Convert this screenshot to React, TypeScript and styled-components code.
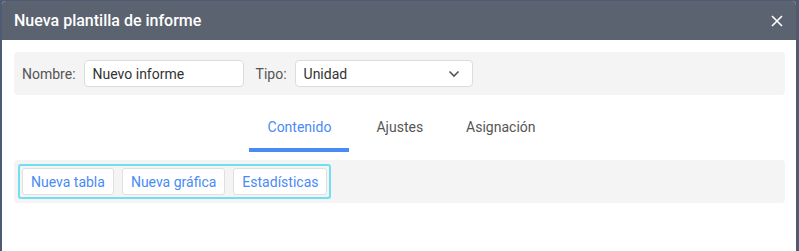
import React from "react";
import styled, { createGlobalStyle } from "styled-components";

const GlobalStyle = createGlobalStyle`
  html, body {
    margin: 0;
    padding: 0;
    background: #4e5b73;
    font-family: Roboto, "Liberation Sans", sans-serif;
  }
`;

const Backdrop = styled.div`
  height: 251px;
  padding: 1px 3px 0 2px;
  box-sizing: border-box;
  overflow: hidden;
`;

const Dialog = styled.div`
  background: #fff;
  height: 100%;
  border-radius: 4px 4px 0 0;
  overflow: hidden;
`;

const Header = styled.div`
  height: 39px;
  background: #5b6270;
  display: flex;
  align-items: center;
  justify-content: space-between;
  padding: 0 13px 0 12px;
`;

const Title = styled.div`
  color: #fff;
  font-size: 16px;
  font-weight: 500;
`;

const Close = styled.button`
  background: none;
  border: 0;
  padding: 0;
  display: flex;
  color: #fff;
  cursor: pointer;
`;

const Body = styled.div`
  padding: 12px 11px 0 12px;
`;

const Panel = styled.div`
  background: #f4f4f4;
  border-radius: 4px;
  height: 43px;
  display: flex;
  align-items: center;
  padding: 0 4px 0 8px;
`;

const Label = styled.label`
  color: #555;
  font-size: 14px;
  margin-right: 8px;
`;

const Input = styled.div<{ $width: number }>`
  width: ${(p) => p.$width}px;
  height: 27px;
  box-sizing: border-box;
  background: #fff;
  border: 1px solid #dcdcdc;
  border-radius: 4px;
  display: flex;
  align-items: center;
  justify-content: space-between;
  padding: 0 12px 0 8px;
  font-size: 14px;
  color: #333;
  margin-right: 12px;
`;

const Tabs = styled.div`
  display: flex;
  justify-content: center;
  margin-top: 15px;
  padding-right: 14px;
  gap: 43px;
`;

const Tab = styled.div<{ $active?: boolean }>`
  font-size: 14px;
  color: ${(p) => (p.$active ? "#4a8af5" : "#555")};
  padding: 9px 0 13px;
  width: ${(p) => (p.$active ? "100px" : "auto")};
  margin-right: ${(p) => (p.$active ? "-16px" : "0")};
  text-align: center;
  border-bottom: 4px solid ${(p) => (p.$active ? "#4a8af5" : "transparent")};
`;

const Toolbar = styled(Panel)`
  margin-top: 8px;
  padding: 0 4px;
`;

const Group = styled.div`
  display: flex;
  gap: 8px;
  padding: 2px;
  border: 2px solid #6fe0ef;
  border-radius: 3px;
`;

const ToolButton = styled.button`
  height: 27px;
  background: #fff;
  border: 1px solid #e0e0e0;
  border-radius: 3px;
  color: #4a8af5;
  font-family: Roboto, "Liberation Sans", sans-serif;
  font-size: 14px;
  padding: 0 8px;
  cursor: pointer;
`;

const Chevron = () => (
  <svg width="12" height="8" viewBox="0 0 12 8" fill="none">
    <path d="M1.5 1.5 6 6 10.5 1.5" stroke="#555" strokeWidth="1.6" />
  </svg>
);

export default function App() {
  return (
    <>
      <GlobalStyle />
      <Backdrop>
        <Dialog>
          <Header>
            <Title>Nueva plantilla de informe</Title>
            <Close aria-label="Cerrar">
              <svg width="12" height="12" viewBox="0 0 12 12">
                <path d="M1 1 11 11M11 1 1 11" stroke="#fff" strokeWidth="1.6" />
              </svg>
            </Close>
          </Header>
          <Body>
            <Panel>
              <Label>Nombre:</Label>
              <Input $width={160}>Nuevo informe</Input>
              <Label>Tipo:</Label>
              <Input $width={178}>
                Unidad
                <Chevron />
              </Input>
            </Panel>
            <Tabs>
              <Tab $active>Contenido</Tab>
              <Tab>Ajustes</Tab>
              <Tab>Asignación</Tab>
            </Tabs>
            <Toolbar>
              <Group>
                <ToolButton>Nueva tabla</ToolButton>
                <ToolButton>Nueva gráfica</ToolButton>
                <ToolButton>Estadísticas</ToolButton>
              </Group>
            </Toolbar>
          </Body>
        </Dialog>
      </Backdrop>
    </>
  );
}
